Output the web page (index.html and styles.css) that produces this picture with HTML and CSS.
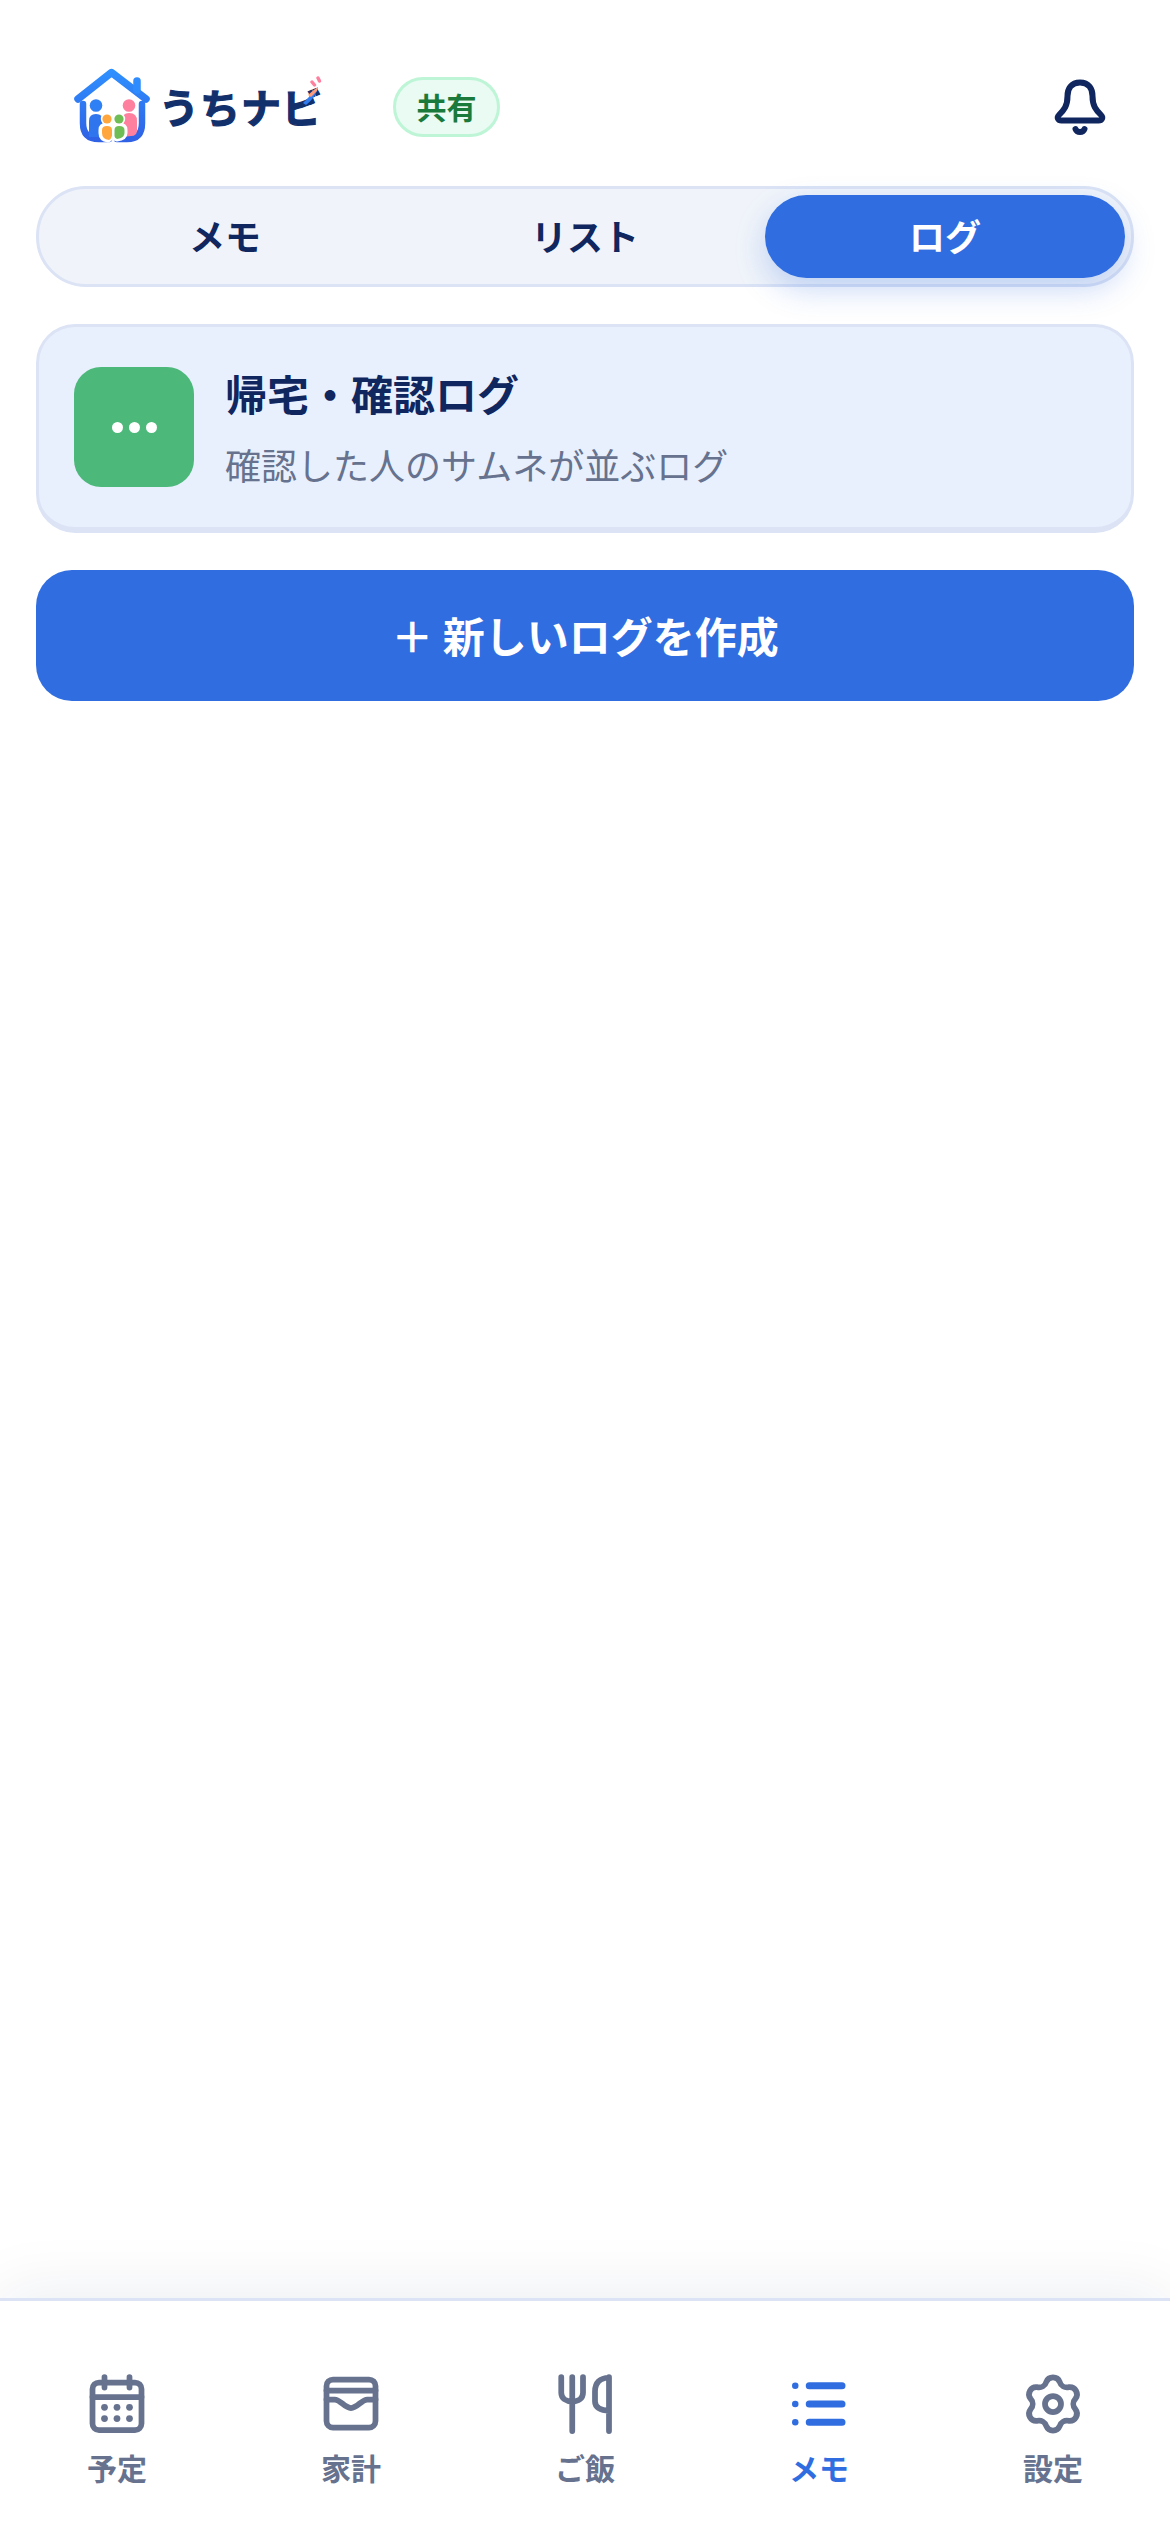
FILE: index.html
```html
<!DOCTYPE html>
<html lang="ja">
<head>
<meta charset="utf-8">
<title>うちナビ</title>
<link rel="stylesheet" href="styles.css">
</head>
<body>
<div class="app">
  <header class="header">
    <div class="brand">
      <svg class="house" viewBox="0 0 76 76" aria-hidden="true">
        <defs>
          <linearGradient id="hg" gradientUnits="userSpaceOnUse" x1="0" y1="0" x2="0" y2="76">
            <stop offset="0" stop-color="#2f92ff"/>
            <stop offset="1" stop-color="#2f5fe4"/>
          </linearGradient>
        </defs>
        <path d="M4 31 L37.500 4.500 L72 31" fill="none" stroke="url(#hg)" stroke-width="7.500" stroke-linecap="round" stroke-linejoin="round"/>
        <path d="M63 22 V13" stroke="#2f8cff" stroke-width="7.500" stroke-linecap="round"/>
        <path d="M9 36 V55 Q9 71 25 71 H35" fill="none" stroke="url(#hg)" stroke-width="6.500" stroke-linecap="round"/>
        <path d="M68 36 V55 Q68 71 53 71 H43" fill="none" stroke="url(#hg)" stroke-width="6.500" stroke-linecap="round"/>
        <circle cx="22" cy="37.500" r="6.300" fill="#2f80f4"/>
        <path d="M15 69 V53 Q15 46 22 46 Q29 46 29 53 V69 Z" fill="#2f76ee"/>
        <circle cx="55" cy="37.500" r="6.300" fill="#ff7f9e"/>
        <path d="M48 69 V53 Q48 45 55 45 Q63 45 63 53 V62 Q63 68 57 68 Z" fill="#ff7f9e"/>
        <circle cx="33" cy="51" r="6.200" fill="#fff"/>
        <circle cx="45" cy="51" r="6.200" fill="#fff"/>
        <path d="M26 62 Q26 56 33 56 Q40 56 39 62 V68 Q37 72 34 73 Q26 72 26 65 Z" fill="#fff" stroke="#fff" stroke-width="3"/>
        <path d="M39 62 Q39 56 45 56 Q52 56 52 62 V65 Q52 71 43 72 Q39 71 39 68 Z" fill="#fff" stroke="#fff" stroke-width="3"/>
        <circle cx="33" cy="51" r="4.600" fill="#ffa63d"/>
        <circle cx="45" cy="51" r="4.600" fill="#6fbd55"/>
        <path d="M28 62 Q28 58 33 58 Q38 58 38 62 V68 Q37 71 35 72 Q28 71 28 65 Z" fill="#ffa63d"/>
        <path d="M40.500 62 Q40.500 58 45 58 Q50.500 58 50.500 62 V65 Q50.500 70 43 71 Q40.500 70 40.500 68 Z" fill="#6fbd55"/>
      </svg>
      <div class="wordmark">
        <span class="wordmark-text">うちナビ</span>
        <svg class="wordmark-mark" viewBox="0 0 26 32" aria-hidden="true">
          <path d="M6 27 Q12 22 17 14 L21 11 Q19 21 9 29 Z" fill="#2f7df0"/>
          <path d="M11 19 Q15 15 21 11 L20 15 Q17 18 14 21 Z" fill="#ff9a7a"/>
          <path d="M15 6 L17.500 9 M21 2 L22.500 5" stroke="#ff7f9e" stroke-width="3.400" stroke-linecap="round"/>
        </svg>
      </div>
    </div>
    <span class="badge">共有</span>
    <svg class="bell" viewBox="0 0 60 60" aria-hidden="true">
      <path d="M30 4.500 C21 4.500 17.500 11 17.500 18 C17.500 28 14 32 9 37 C6.500 39.500 8 42.500 11.500 42.500 H48.500 C52 42.500 53.500 39.500 51 37 C46 32 42.500 28 42.500 18 C42.500 11 39 4.500 30 4.500 Z" fill="none" stroke="#10265f" stroke-width="6" stroke-linejoin="round"/>
      <path d="M25.500 51 C27 55 33 55 34.500 51" fill="none" stroke="#10265f" stroke-width="6" stroke-linecap="round"/>
    </svg>
  </header>

  <main class="main">
    <div class="tabs">
      <div class="tab">メモ</div>
      <div class="tab">リスト</div>
      <div class="tab tab-active">ログ</div>
    </div>

    <section class="card">
      <div class="card-icon"><i class="dot"></i><i class="dot"></i><i class="dot"></i></div>
      <div class="card-body">
        <h2 class="card-title">帰宅・確認ログ</h2>
        <p class="card-sub">確認した人のサムネが並ぶログ</p>
      </div>
    </section>

    <button class="create" type="button">＋ 新しいログを作成</button>
  </main>

  <nav class="nav">
    <div class="nav-item">
      <svg class="nav-icon" viewBox="0 0 24 24" aria-hidden="true">
        <rect x="2.200" y="3.400" width="19.600" height="19" rx="2.600"/>
        <path d="M2.200 9.200 H21.800 M7 1.200 V5.400 M17 1.200 V5.400"/>
        <g class="fill">
          <circle cx="7" cy="13.300" r="1.350"/><circle cx="12" cy="13.300" r="1.350"/><circle cx="17" cy="13.300" r="1.350"/>
          <circle cx="7" cy="17.800" r="1.350"/><circle cx="12" cy="17.800" r="1.350"/><circle cx="17" cy="17.800" r="1.350"/>
        </g>
      </svg>
      <span class="nav-label">予定</span>
    </div>
    <div class="nav-item">
      <svg class="nav-icon" viewBox="0 0 24 24" aria-hidden="true">
        <rect x="2.200" y="2.200" width="19.600" height="19.200" rx="2.600"/>
        <path d="M2.200 6.600 H21.800"/>
        <path d="M2.200 10.200 H5.500 C7.800 10.200 9.400 13.600 12 13.600 S16.200 10.200 18.500 10.200 H21.800"/>
      </svg>
      <span class="nav-label">家計</span>
    </div>
    <div class="nav-item">
      <svg class="nav-icon" viewBox="0 0 24 24" aria-hidden="true">
        <path d="M2.500 1.200 V7.500 C2.500 9.800 4.500 11 6.900 11 C9.300 11 11.200 9.800 11.200 7.500 V1.200 M6.900 1.200 V22.800"/>
        <path d="M21.600 1.200 V22.800 M21.600 1.400 C18 1.600 16 3.500 16 7 V11 C16 13.200 18 14.600 21.600 14.600"/>
      </svg>
      <span class="nav-label">ご飯</span>
    </div>
    <div class="nav-item nav-item-active">
      <svg class="nav-icon" viewBox="0 0 24 24" aria-hidden="true">
        <path class="thick" d="M8.100 4.700 H21.200 M8.100 12 H21.200 M8.100 19.300 H21.200"/>
        <g class="fill"><circle cx="2.500" cy="4.700" r="1.300"/><circle cx="2.500" cy="12" r="1.300"/><circle cx="2.500" cy="19.300" r="1.300"/></g>
      </svg>
      <span class="nav-label">メモ</span>
    </div>
    <div class="nav-item">
      <svg class="nav-icon" viewBox="0 0 24 24" aria-hidden="true">
        <path d="M9.310 3.200 A2.900 2.900 0 0 1 14.690 3.200 A3 3 0 0 0 18.270 5.270 A2.900 2.900 0 0 1 20.960 9.930 A3 3 0 0 0 20.960 14.070 A2.900 2.900 0 0 1 18.270 18.730 A3 3 0 0 0 14.690 20.800 A2.900 2.900 0 0 1 9.310 20.800 A3 3 0 0 0 5.730 18.730 A2.900 2.900 0 0 1 3.040 14.070 A3 3 0 0 0 3.040 9.930 A2.900 2.900 0 0 1 5.730 5.270 A3 3 0 0 0 9.310 3.200 Z"/>
        <circle cx="12" cy="12" r="3.200"/>
      </svg>
      <span class="nav-label">設定</span>
    </div>
  </nav>
</div>
</body>
</html>
```
FILE: styles.css
```css
* { box-sizing: border-box; }
html, body { margin: 0; padding: 0; background: #fff; }
body { font-family: "Noto Sans CJK JP", "Noto Sans", sans-serif; color: #10265f; }

.app { display: flex; flex-direction: column; width: 1170px; height: 2532px; overflow: hidden; }

.header { display: flex; align-items: center; height: 186px; padding: 26px 60px 0 74px; }
.brand { display: flex; align-items: center; gap: 9px; }
.house { display: block; width: 76px; height: 76px; }
.wordmark { position: relative; width: 159px; }
.wordmark-text { display: block; font-size: 40px; line-height: 52px; font-weight: 700; letter-spacing: 1px; color: #12306b; white-space: nowrap; -webkit-text-stroke: 1.2px #12306b; }
.wordmark-mark { position: absolute; right: -5px; top: -4px; width: 26px; height: 32px; }

.badge { display: flex; align-items: center; justify-content: center; width: 107px; height: 60px; margin: 2px 0 0 75px; border: 3px solid #bdf5d6; border-radius: 30px; background: #e9fbf3; color: #1a7a3c; font-size: 30px; font-weight: 700; line-height: 1; padding-bottom: 2px; }
.bell { display: block; width: 60px; height: 60px; margin: 4px 0 0 auto; }

.main { flex: 1; display: flex; flex-direction: column; gap: 37px; padding: 0 36px; }

.tabs { display: grid; grid-template-columns: repeat(3, 1fr); height: 101px; padding: 6px; border: 3px solid #dbe3f5; border-radius: 50px; background: #f0f4fa; }
.tab { display: flex; align-items: center; justify-content: center; padding-bottom: 3px; border-radius: 42px; font-size: 36px; font-weight: 700; color: #10265f; }
.tab-active { background: #2f6de0; color: #fff; box-shadow: 0 12px 30px rgba(47, 109, 224, .25); }

.card { display: flex; align-items: center; gap: 31px; height: 209px; padding: 0 35px; border: 3px solid #dbe3f5; border-bottom-width: 6px; border-radius: 39px; background: #e8f0fd; }
.card-icon { display: flex; align-items: center; justify-content: center; gap: 6px; width: 120px; height: 120px; border-radius: 27px; background: #4cb87a; flex: none; }
.dot { display: block; width: 11px; height: 11px; border-radius: 50%; background: #fff; }
.card-body { display: flex; flex-direction: column; gap: 17px; }
.card-title { margin: 0; font-size: 42px; line-height: 56px; font-weight: 700; color: #10265f; }
.card-sub { margin: 0; font-size: 36px; line-height: 52px; font-weight: 400; color: #66728e; }

.create { display: block; width: 100%; height: 131px; padding: 0 0 3px; border: 0; border-radius: 36px; background: #2f6de0; color: #fff; font-family: inherit; font-size: 42px; font-weight: 700; }

.nav { display: grid; grid-template-columns: repeat(5, 1fr); height: 234px; padding-top: 73px; border-top: 3px solid #dbe3f5; background: #fff; box-shadow: 0 -6px 60px rgba(16, 38, 95, .08); }
.nav-item { display: flex; flex-direction: column; align-items: center; gap: 15px; color: #66728e; }
.nav-item-active { color: #2f6de0; }
.nav-icon { display: block; width: 60px; height: 60px; fill: none; stroke: currentColor; stroke-width: 2.300; stroke-linecap: round; stroke-linejoin: round; }
.nav-icon .fill { fill: currentColor; stroke: none; }
.nav-icon .thick { stroke-width: 2.800; }
.nav-label { font-size: 30px; line-height: 36px; font-weight: 700; }
```
